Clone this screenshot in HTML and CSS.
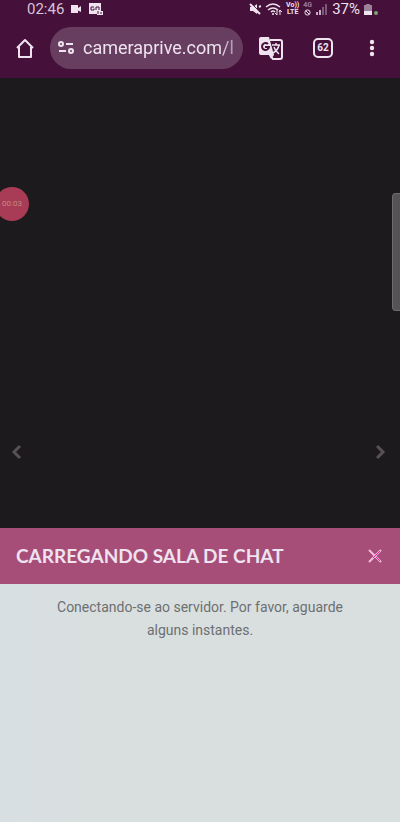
FILE: index.html
```html
<!DOCTYPE html>
<html lang="pt-BR">
<head>
<meta charset="utf-8">
<meta name="viewport" content="width=device-width, initial-scale=1">
<title>Sala de chat</title>
<link rel="stylesheet" href="styles.css">
</head>
<body>
<header class="browser">
  <div class="status">
    <div class="status-left">
      <time class="clock">02:46</time>
      <svg width="12" height="10" viewBox="0 0 12 10" fill="currentColor"><path d="M1 1h7v3l3-2v6L8 6.500V9H1z"/></svg>
      <svg width="15" height="12" viewBox="0 0 15 12"><path fill="currentColor" d="M1 0h12v8h2v4H9v-1H1z"/><path d="M6 4H3v3h3V5.500M8 7V4h3v3M10 8v3M13 9v2" fill="none" stroke="#45103a"/></svg>
    </div>
    <div class="status-right">
      <svg width="12" height="12" viewBox="0 0 12 12"><path d="M1 4h3l4-3v10L4 8H1z" fill="currentColor"/><path d="M2 0l10 10" stroke="#45103a" stroke-width="1"/><path d="M1 1l10 10M10 4l2-1" stroke="currentColor" stroke-width="2"/></svg>
      <svg width="17" height="13" viewBox="0 0 17 13" fill="none" stroke="currentColor" stroke-width="1.500"><path d="M1 4q7-6 14 0M3 7q5-4 10 0M6 9q2-2 4 0"/><circle cx="8" cy="11" r="1" fill="currentColor" stroke="none"/><path d="M12 7v5m-2-2l2 2M15 12V7m-1 2l1-2 2 2" stroke-width="1"/></svg>
      <span class="carrier"><span>Vo))</span><span>LTE</span></span>
      <span class="carrier"><span class="faint">4G</span>
        <svg width="7" height="7" viewBox="0 0 7 7" fill="none" stroke="currentColor"><circle cx="3.500" cy="3.500" r="2.600"/><path d="M2 2l3 3"/></svg></span>
      <svg width="12" height="12" viewBox="0 0 12 12" stroke="currentColor" stroke-width="1.500"><path d="M1 9v3M4 7v5"/><path d="M7 4v8M10 1v11" opacity=".45"/></svg>
      <span class="percent">37%</span>
      <svg width="14" height="12" viewBox="0 0 14 12"><path d="M2 1h4v1h2v10H0V2h2z" fill="#9c7f98"/><path d="M0 8h8v4H0z" fill="#eee3ef"/><circle cx="12" cy="10" r="2" fill="#7ba36c"/></svg>
    </div>
  </div>
  <div class="toolbar">
    <button class="icon" aria-label="Página inicial"><svg width="20" height="20" viewBox="0 0 20 20" fill="none" stroke="currentColor" stroke-width="2"><path d="M2 10l8-8 8 8M4 9v10h12V9" stroke-linejoin="round"/></svg></button>
    <div class="address">
      <svg width="16" height="14" viewBox="0 0 16 14" fill="none" stroke="currentColor" stroke-width="2"><circle cx="3" cy="3" r="2"/><path d="M8 3h7M1 10h7"/><circle cx="13" cy="10" r="2"/></svg>
      <input class="url" type="text" aria-label="Endereço" value="cameraprive.com/l">
    </div>
    <button class="icon" aria-label="Traduzir"><svg width="24" height="24" viewBox="0 0 24 24" fill="none"><path d="M11 4h10q2 0 2 2v15q0 2-2 2h-7l-3-4" stroke="currentColor" stroke-width="2"/><path d="M2 1h8l5 18H2q-2 0-2-2V3q0-2 2-2z" fill="currentColor"/><path d="M10 19h5l-3 4z" fill="currentColor"/><path d="M9 8a3.500 3.500 0 1 0 1 3H6" stroke="#45103a" stroke-width="2"/><path d="M13 9h8M17 7v2M20 9q-1 5-6 8M15 11q1 4 5 7" stroke="currentColor" stroke-width="1.500"/></svg></button>
    <button class="tabs" aria-label="62 guias abertas">62</button>
    <button class="icon" aria-label="Mais opções"><svg width="6" height="18" viewBox="0 0 6 18" fill="currentColor"><circle cx="3" cy="3" r="2.200"/><circle cx="3" cy="9" r="2.200"/><circle cx="3" cy="15" r="2.200"/></svg></button>
  </div>
</header>
<main class="room">
  <section class="stage" aria-label="Transmissão">
    <div class="timer">00:03</div>
    <div class="edge-handle"></div>
    <button class="arrow" aria-label="Anterior"><svg width="10" height="16" viewBox="0 0 10 16" fill="none" stroke="currentColor" stroke-width="3"><path d="M9 2L3 8l6 6"/></svg></button>
    <button class="arrow" aria-label="Próxima"><svg width="10" height="16" viewBox="0 0 10 16" fill="none" stroke="currentColor" stroke-width="3"><path d="M1 2l6 6-6 6"/></svg></button>
  </section>
  <section class="chat">
    <div class="chat-head">
      <h1>CARREGANDO SALA DE CHAT</h1>
      <button class="close" aria-label="Fechar"><svg width="14" height="14" viewBox="0 0 14 14" fill="none"><path d="M1 1l12 12M13 1L1 13" stroke="#f3bce0" stroke-width="2"/><path d="M5 9l7-7M8 8l4 4" stroke="#f51fa4"/></svg></button>
    </div>
    <p class="message">Conectando-se ao servidor. Por favor, aguarde alguns instantes.</p>
  </section>
</main>
</body>
</html>
```
FILE: styles.css
```css
* { box-sizing: border-box; }

body {
  margin: 0;
  min-height: 100vh;
  display: flex;
  flex-direction: column;
  font-family: Roboto, "Liberation Sans", sans-serif;
  background: #1c1a1c;
}

button {
  padding: 0;
  border: 0;
  background: none;
  color: inherit;
  font: inherit;
}

svg { display: block; flex: none; }

.browser {
  background: #45103a;
  color: #eee3ef;
}

.status {
  display: flex;
  justify-content: space-between;
  height: 18px;
  padding: 0 22px 0 27px;
}

.status-left,
.status-right {
  display: flex;
  align-items: center;
}

.status-left { gap: 6px; }
.status-right { gap: 4px; }

.clock,
.percent {
  font-size: 15px;
  line-height: 16px;
}

.clock { color: #d8c3d6; }

.carrier {
  display: flex;
  flex-direction: column;
  align-items: center;
  font-size: 7px;
  font-weight: 700;
  line-height: 7px;
}

.faint { opacity: .5; }

.toolbar {
  display: flex;
  align-items: center;
  height: 60px;
  padding: 0 18px 0 15px;
}

.icon {
  display: grid;
  place-items: center;
  min-width: 20px;
  height: 40px;
}

.address {
  flex: 1;
  min-width: 0;
  display: flex;
  align-items: center;
  gap: 9px;
  height: 42px;
  margin: 0 16px 0 15px;
  padding: 0 6px 0 8px;
  border-radius: 21px;
  background: #683e60;
}

.url {
  flex: 1;
  min-width: 0;
  padding: 0;
  border: 0;
  outline: 0;
  background: none;
  color: inherit;
  font: 18px/24px Roboto, "Liberation Sans", sans-serif;
  mask-image: linear-gradient(to right, #000 88%, #0006);
}

.tabs {
  width: 20px;
  height: 20px;
  margin: 0 29px 0 30px;
  border: 2px solid;
  border-radius: 5px;
  font-size: 10px;
  font-weight: 700;
  line-height: 16px;
}

.room {
  flex: 1;
  display: grid;
  grid-template-rows: 75fr 49fr;
}

.stage {
  position: relative;
  display: flex;
  justify-content: space-between;
  align-items: flex-end;
  padding: 0 14px 68px 11px;
  color: #575156;
}

.timer {
  position: absolute;
  top: 109px;
  left: -5px;
  width: 34px;
  height: 34px;
  border-radius: 50%;
  background: #a83c56;
  color: #c18a80;
  font-size: 8px;
  line-height: 34px;
  text-align: center;
}

.edge-handle {
  position: absolute;
  top: 115px;
  right: 0;
  width: 8px;
  height: 118px;
  border: 1px solid #716b6f;
  border-right: 0;
  border-radius: 4px 0 0 4px;
  background: #555355;
}

.chat {
  background: linear-gradient(90deg, #d8dfe2, #d9dfde 33%);
}

.chat-head {
  display: flex;
  justify-content: space-between;
  align-items: center;
  height: 56px;
  padding: 0 18px 0 16px;
  background: #a64d78;
  color: #eee3ef;
}

h1 {
  margin: 0;
  font: 700 19px/24px Lato, "Open Sans", sans-serif;
}

.message {
  margin: 0;
  padding: 12px 48px;
  color: #6d6f72;
  font-size: 14px;
  line-height: 23px;
  text-align: center;
}
```
